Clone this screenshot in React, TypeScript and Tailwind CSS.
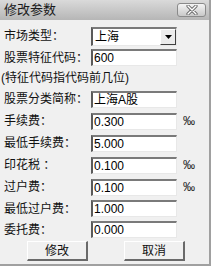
import React from 'react';

const font = { fontFamily: '"Liberation Sans", "Noto Sans CJK SC", sans-serif' };

function Field({ value }: { value: string }) {
  return (
    <div className="w-[86px] h-[17px] bg-white border-t-2 border-l-2 border-t-[#7a7a7a] border-l-[#5a5a5a] border-r border-b border-r-[#e8e8e8] border-b-[#e8e8e8] flex items-center pl-[1px] text-[12px] leading-none text-black">
      {value}
    </div>
  );
}

function Row({ label, value, unit, h }: { label: string; value: string; unit?: boolean; h: string }) {
  return (
    <div className={`flex items-center ${h}`}>
      <div className="w-[91px] pl-[4px] text-[12px] text-[#111]">{label}</div>
      <Field value={value} />
      {unit && <div className="ml-[6px] text-[12px] text-[#222]">‰</div>}
    </div>
  );
}

export default function App() {
  return (
    <div className="w-[213px] h-[267px] bg-white" style={font}>
      <div className="w-[211px] h-[266px] bg-[#f0f0f0] border-r-2 border-b-2 border-[#a0a0a0] flex flex-col">
        <div className="h-[20px] bg-gradient-to-b from-[#dadada] to-[#b6b6b6] flex items-center justify-between pl-[4px] pr-[3px]">
          <span className="text-[13px] text-[#1a1a1a]">修改参数</span>
          <div className="w-[29px] h-[14px] rounded-[3px] border border-[#8a8a8a] bg-gradient-to-b from-[#f4f4f4] to-[#c8c8c8] flex items-center justify-center">
            <svg width="14" height="10" viewBox="0 0 14 10">
              <path d="M3 1 L11 9 M11 1 L3 9" stroke="#6a6a6a" strokeWidth="3.2" strokeLinecap="round" />
              <path d="M3 1 L11 9 M11 1 L3 9" stroke="#ffffff" strokeWidth="1.4" strokeLinecap="round" />
            </svg>
          </div>
        </div>
        <div className="pt-[5px] flex flex-col">
          <div className="flex items-center h-[22px]">
            <div className="w-[91px] pl-[4px] text-[12px] text-[#111]">市场类型：</div>
            <div className="w-[86px] h-[19px] bg-white border-t-2 border-l-2 border-t-[#7a7a7a] border-l-[#5a5a5a] border-r border-b border-r-[#e8e8e8] border-b-[#e8e8e8] flex items-center justify-between">
              <span className="pl-[2px] text-[12px] leading-none">上海</span>
              <div className="w-[16px] h-full bg-[#ececec] border-t border-l border-t-white border-l-white border-r border-b border-r-[#404040] border-b-[#404040] flex items-center justify-center">
                <svg width="7" height="4" viewBox="0 0 7 4">
                  <path d="M0 0 H7 L3.5 4 Z" fill="#000" />
                </svg>
              </div>
            </div>
          </div>
          <Row label="股票特征代码：" value="600" h="h-[21px]" />
          <div className="h-[20px] flex items-center pl-[1px] text-[12px] text-[#111]">(特征代码指代码前几位)</div>
          <Row label="股票分类简称：" value="上海A股" h="h-[22px]" />
          <Row label="手续费：" value="0.300" unit h="h-[22px]" />
          <Row label="最低手续费：" value="5.000" h="h-[22px]" />
          <Row label="印花税 ：" value="0.100" unit h="h-[22px]" />
          <Row label="过户费：" value="0.100" unit h="h-[22px]" />
          <Row label="最低过户费：" value="1.000" h="h-[21px]" />
          <Row label="委托费：" value="0.000" h="h-[21px]" />
          <div className="h-[20px] mt-[1px] flex">
            <button className="ml-[27px] w-[61px] h-[20px] bg-[#f0f0f0] border-t border-l border-t-white border-l-white border-r-2 border-b-2 border-r-[#6a6a6a] border-b-[#6a6a6a] text-[12px] text-[#111]">修改</button>
            <button className="ml-[36px] w-[61px] h-[20px] bg-[#f0f0f0] border-t border-l border-t-white border-l-white border-r-2 border-b-2 border-r-[#6a6a6a] border-b-[#6a6a6a] text-[12px] text-[#111]">取消</button>
          </div>
        </div>
      </div>
    </div>
  );
}
